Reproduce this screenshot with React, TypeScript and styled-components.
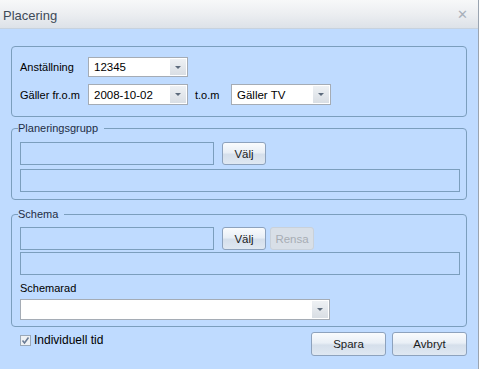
import styled, { createGlobalStyle, css } from 'styled-components';

const GlobalStyle = createGlobalStyle`
  html, body {
    margin: 0;
    padding: 0;
    background: #ffffff;
  }
  body {
    font-family: 'Liberation Sans', Arial, sans-serif;
    font-size: 11px;
    color: #000;
  }
  *, *::before, *::after {
    box-sizing: border-box;
  }
`;

const Window = styled.div`
  width: 479px;
  height: 369px;
  display: flex;
  flex-direction: column;
  border-right: 1px solid #9aa4b0;
  background: #bfdbff;
`;

const TitleBar = styled.div`
  height: 29px;
  flex: none;
  display: flex;
  align-items: center;
  justify-content: space-between;
  padding: 0 10px 0 3px;
  background: linear-gradient(to bottom, #f7f8f9 0%, #eceef1 50%, #dde2e8 100%);
  border-bottom: 1px solid #c7d2de;
`;

const Title = styled.span`
  font-size: 13px;
  color: #3e4a58;
  padding-top: 2px;
`;

const Close = styled.span`
  font-size: 13px;
  color: #a8b0ba;
`;

const Body = styled.div`
  flex: 1;
  padding: 17px 11px 0 11px;
  display: flex;
  flex-direction: column;
`;

const Group = styled.fieldset<{ $mt?: number }>`
  margin: ${(p) => p.$mt ?? 0}px 0 0 0;
  padding: 0 8px;
  min-width: 0;
  border: 1px solid #7b9ebd;
  border-radius: 4px;
  display: flex;
  flex-direction: column;
`;

const Legend = styled.legend`
  padding: 0 6px 0 0;
  margin-left: -2px;
  line-height: 14px;
  color: #1e2d44;
`;

const Row = styled.div<{ $gap?: number }>`
  display: flex;
  align-items: center;
  gap: ${(p) => p.$gap ?? 8}px;
`;

const Label = styled.span<{ $w?: number }>`
  width: ${(p) => (p.$w ? `${p.$w}px` : 'auto')};
  flex: none;
`;

const Combo = styled.div<{ $w: number }>`
  width: ${(p) => p.$w}px;
  height: 21px;
  border: 1px solid #a5acb5;
  background: #fff;
  display: flex;
  align-items: stretch;
`;

const ComboText = styled.div`
  flex: 1;
  padding-left: 5px;
  display: flex;
  align-items: center;
  font-size: 11.5px;
`;

const ComboArrow = styled.div`
  width: 16px;
  margin: 1px;
  background: linear-gradient(to bottom, #eef1f4, #d9dee4);
  display: flex;
  align-items: center;
  justify-content: center;
  &::after {
    content: '';
    border-left: 3px solid transparent;
    border-right: 3px solid transparent;
    border-top: 3px solid #5d6b7c;
  }
`;

const Field = styled.div<{ $w: number }>`
  width: ${(p) => p.$w}px;
  height: 23px;
  border: 1px solid #7b9ebd;
  background: #bfdbff;
`;

const Button = styled.button<{ $w: number; $h?: number; disabled?: boolean }>`
  width: ${(p) => p.$w}px;
  height: ${(p) => p.$h ?? 23}px;
  padding: 0;
  font-family: inherit;
  font-size: 11.5px;
  color: #1b1b1b;
  border: 1px solid #8da2bd;
  border-radius: 3px;
  background: linear-gradient(to bottom, #f9fbfd 0%, #e9eff6 45%, #d5dfeb 55%, #dfe8f2 100%);
  ${(p) =>
    p.disabled &&
    css`
      color: #a7adb4;
      border-color: #c9d1da;
      background: #d8dfe7;
    `}
`;

const Footer = styled.div`
  display: flex;
  align-items: center;
  justify-content: space-between;
  margin-top: 5px;
  padding-left: 9px;
`;

const Check = styled.label`
  display: flex;
  align-items: center;
  gap: 3px;
  margin-top: -8px;
  font-size: 12px;
`;

const Box = styled.span`
  width: 11px;
  height: 11px;
  border: 1px solid #9aa8b8;
  background: #eef1f4;
  display: flex;
  align-items: center;
  justify-content: center;
`;

const Buttons = styled.div`
  display: flex;
  gap: 6px;
`;

export default function App() {
  return (
    <>
      <GlobalStyle />
      <Window>
        <TitleBar>
          <Title>Placering</Title>
          <Close>✕</Close>
        </TitleBar>
        <Body>
          <Group style={{ height: 71, paddingTop: 10, gap: 7 }}>
            <Row $gap={0}>
              <Label $w={68}>Anställning</Label>
              <Combo $w={100} style={{ height: 20 }}>
                <ComboText>12345</ComboText>
                <ComboArrow />
              </Combo>
            </Row>
            <Row $gap={0}>
              <Label $w={68}>Gäller fr.o.m</Label>
              <Combo $w={100}>
                <ComboText>2008-10-02</ComboText>
                <ComboArrow />
              </Combo>
              <Label $w={43} style={{ paddingLeft: 7 }}>t.o.m</Label>
              <Combo $w={100}>
                <ComboText>Gäller TV</ComboText>
                <ComboArrow />
              </Combo>
            </Row>
          </Group>

          <Group $mt={4} style={{ paddingTop: 7, paddingBottom: 7, gap: 4 }}>
            <Legend>Planeringsgrupp</Legend>
            <Row $gap={8}>
              <Field $w={194} />
              <Button $w={44}>Välj</Button>
            </Row>
            <Field $w={440} />
          </Group>

          <Group $mt={7} style={{ paddingTop: 6, paddingBottom: 6 }}>
            <Legend>Schema</Legend>
            <Row $gap={8}>
              <Field $w={194} />
              <Row $gap={4}>
                <Button $w={44}>Välj</Button>
                <Button $w={44} disabled>
                  Rensa
                </Button>
              </Row>
            </Row>
            <Field $w={440} style={{ marginTop: 2 }} />
            <Label style={{ marginTop: 6, lineHeight: '14px' }}>Schemarad</Label>
            <Combo $w={310} style={{ marginTop: 4 }}>
              <ComboText />
              <ComboArrow />
            </Combo>
          </Group>

          <Footer>
            <Check>
              <Box>
                <svg width="9" height="9" viewBox="0 0 9 9">
                  <path d="M1.5 4.5 L3.5 7 L7.5 1.5" fill="none" stroke="#6a7c96" strokeWidth="1.6" />
                </svg>
              </Box>
              Individuell tid
            </Check>
            <Buttons>
              <Button $w={75} $h={24}>
                Spara
              </Button>
              <Button $w={75} $h={24}>
                Avbryt
              </Button>
            </Buttons>
          </Footer>
        </Body>
      </Window>
    </>
  );
}
